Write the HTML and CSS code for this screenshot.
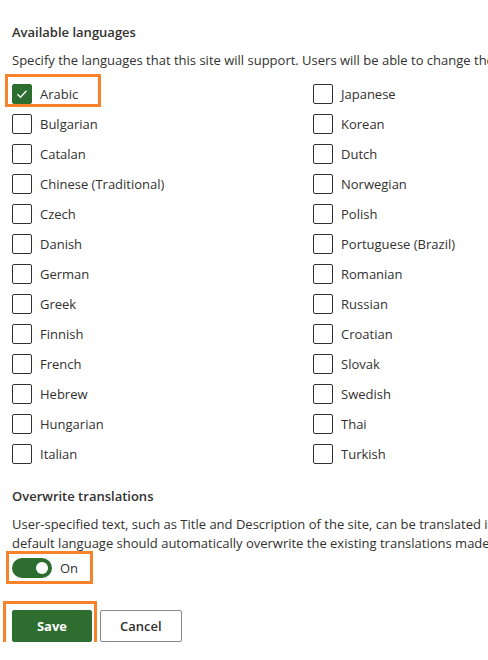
FILE: index.html
```html
<!DOCTYPE html>
<html lang="en">
  <head>
    <meta charset="UTF-8" />
    <meta name="viewport" content="width=device-width, initial-scale=1.0" />
    <title>Language settings</title>
    <link rel="stylesheet" href="styles.css">
  </head>
  <body>
    <div class="panel">
      <h2 class="section-title">Available languages</h2>
      <p class="section-text">Specify the languages that this site will support. Users will be able to change the language of the site.</p>

      <div class="lang-grid">
        <label class="check marked"><span class="box checked"><svg viewBox="0 0 20 20" width="20" height="20"><path d="M5.5 10.2l3 3 6-6.4" fill="none" stroke="#fff" stroke-width="1.3"/></svg></span>Arabic</label>
        <label class="check"><span class="box"></span>Japanese</label>
        <label class="check"><span class="box"></span>Bulgarian</label>
        <label class="check"><span class="box"></span>Korean</label>
        <label class="check"><span class="box"></span>Catalan</label>
        <label class="check"><span class="box"></span>Dutch</label>
        <label class="check"><span class="box"></span>Chinese (Traditional)</label>
        <label class="check"><span class="box"></span>Norwegian</label>
        <label class="check"><span class="box"></span>Czech</label>
        <label class="check"><span class="box"></span>Polish</label>
        <label class="check"><span class="box"></span>Danish</label>
        <label class="check"><span class="box"></span>Portuguese (Brazil)</label>
        <label class="check"><span class="box"></span>German</label>
        <label class="check"><span class="box"></span>Romanian</label>
        <label class="check"><span class="box"></span>Greek</label>
        <label class="check"><span class="box"></span>Russian</label>
        <label class="check"><span class="box"></span>Finnish</label>
        <label class="check"><span class="box"></span>Croatian</label>
        <label class="check"><span class="box"></span>French</label>
        <label class="check"><span class="box"></span>Slovak</label>
        <label class="check"><span class="box"></span>Hebrew</label>
        <label class="check"><span class="box"></span>Swedish</label>
        <label class="check"><span class="box"></span>Hungarian</label>
        <label class="check"><span class="box"></span>Thai</label>
        <label class="check"><span class="box"></span>Italian</label>
        <label class="check"><span class="box"></span>Turkish</label>
      </div>

      <h2 class="section-title overwrite">Overwrite translations</h2>
      <p class="section-text lines">User-specified text, such as Title and Description of the site, can be translated into each supported language. Changes made in the<br>default language should automatically overwrite the existing translations made in all languages.</p>

      <div class="toggle-wrap marked">
        <span class="toggle"><span class="knob"></span></span>
        <span class="toggle-label">On</span>
      </div>

      <div class="actions">
        <span class="save-wrap marked"><button class="btn primary">Save</button></span>
        <button class="btn">Cancel</button>
      </div>
    </div>
  </body>
</html>
```

FILE: styles.css
```css
/* styles.css */
body {
  margin: 0;
  font-family: "Open Sans", "Noto Sans", Arial, sans-serif;
  font-size: 13px;
  color: #323130;
  background: #fff;
  overflow: hidden;
}

.panel {
  padding: 22px 0 0 12px;
  width: 476px;
  overflow: hidden;
}

.section-title {
  margin: 0;
  font-size: 13px;
  font-weight: 600;
  line-height: 20px;
}

.section-text {
  margin: 8px 0 0;
  line-height: 20px;
  white-space: nowrap;
}

.lines {
  margin-top: 9px;
  line-height: 19px;
}

.lang-grid {
  display: grid;
  grid-template-columns: 301px 1fr;
  row-gap: 10px;
  margin-top: 14px;
}

.check {
  display: flex;
  align-items: center;
  gap: 8px;
  height: 20px;
  width: max-content;
  line-height: 20px;
}

.box {
  width: 20px;
  height: 20px;
  box-sizing: border-box;
  border: 1px solid #323130;
  border-radius: 2px;
  display: inline-block;
}

.box svg {
  display: block;
  margin: -1px;
}

.box.checked {
  background: #2e6d30;
  border-color: #2e6d30;
}

/* orange annotation frames */
.marked {
  position: relative;
}

.marked::before {
  content: "";
  position: absolute;
  border: 3px solid #f7822a;
  pointer-events: none;
}

.check.marked::before {
  left: -7px;
  top: -10px;
  right: -23px;
  bottom: -3px;
}

.overwrite {
  margin-top: 22px;
}

.toggle-wrap {
  display: flex;
  align-items: center;
  gap: 8px;
  width: 75px;
  height: 20px;
  margin-top: 5px;
}

.toggle-wrap.marked::before {
  left: -6px;
  top: -7px;
  right: -6px;
  bottom: -6px;
}

.toggle {
  width: 40px;
  height: 20px;
  border-radius: 10px;
  background: #2e6d30;
  display: flex;
  align-items: center;
  justify-content: flex-end;
  padding: 0 4px;
  box-sizing: border-box;
}

.knob {
  width: 12px;
  height: 12px;
  border-radius: 50%;
  background: #fff;
}

.toggle-label {
  line-height: 20px;
}

.actions {
  display: flex;
  gap: 8px;
  margin-top: 32px;
}

.save-wrap {
  display: inline-flex;
}

.save-wrap.marked::before {
  left: -9px;
  top: -9px;
  right: -5px;
  bottom: -10px;
}

.btn {
  height: 32px;
  min-width: 80px;
  padding: 0 19px;
  border: 1px solid #8a8886;
  border-radius: 2px;
  background: #fff;
  color: #323130;
  font-family: inherit;
  font-size: 13px;
  font-weight: 600;
}

.btn.primary {
  background: #2e6d30;
  border-color: #2e6d30;
  color: #fff;
  font-weight: 700;
}
```
